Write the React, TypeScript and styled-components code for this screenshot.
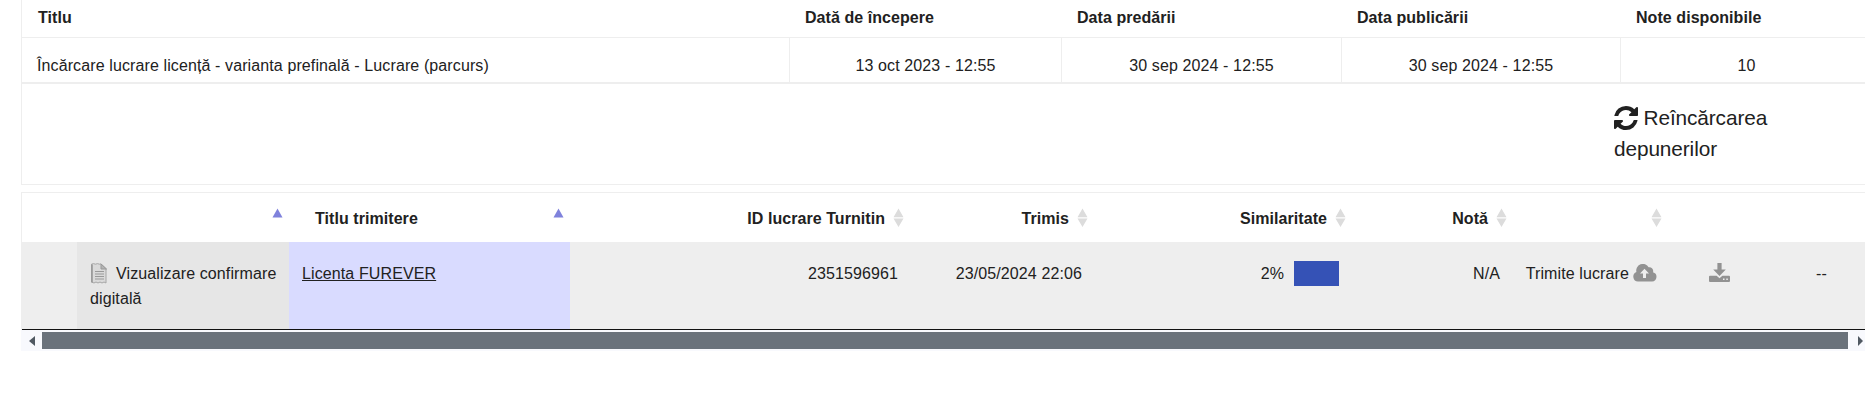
import React from "react";
import styled, { createGlobalStyle } from "styled-components";

const Global = createGlobalStyle`
  * { box-sizing: border-box; }
  html, body { margin: 0; background: #fff; overflow: hidden; }
  body {
    font-family: "Liberation Sans", Arial, sans-serif;
    font-size: 16px;
    line-height: 25px;
    letter-spacing: 0.11px;
    color: #212121;
  }
`;

const Page = styled.main`
  width: 1865px;
  height: 406px;
  padding-left: 21px;
  overflow: hidden;
`;

const InfoPanel = styled.section`
  width: 1852px;
  height: 185px;
  border: 1px solid #eee;
  border-top: 0;
`;

const InfoGrid = styled.div<{ $height: number; $line: number }>`
  display: grid;
  grid-template-columns: 767px 272px 280px 279px 252px;
  height: ${(p) => p.$height}px;
  border-bottom: ${(p) => p.$line}px solid #eee;
`;

const InfoHead = styled.div`
  padding: 5px 0 0 16px;
  font-weight: 700;
  letter-spacing: 0.06px;
  white-space: nowrap;
`;

const InfoCell = styled.div<{ $first?: boolean }>`
  padding: 15px 0 0 ${(p) => (p.$first ? "15px" : "0")};
  text-align: ${(p) => (p.$first ? "left" : "center")};
  border-left: ${(p) => (p.$first ? "0" : "1px solid #eee")};
  white-space: nowrap;
`;

const Reload = styled.div`
  width: 170px;
  margin: 18px 0 0 1592px;
  font-size: 20.8px;
  line-height: 31px;
  letter-spacing: -0.1px;

  svg { width: 28px; height: 28px; margin: 0 3.5px 0 -2px; vertical-align: -7px; }
`;

const Submissions = styled.section`
  width: 1852px;
  margin-top: 7px;
  border-left: 1px solid #eee;
  border-top: 1px solid #eee;
`;

const columns = "55px 212px 281px 344px 184px 258px 161px 155px 72px 130px";

const HeadRow = styled.div`
  display: grid;
  grid-template-columns: ${columns};
  height: 49px;
  font-weight: 700;
  letter-spacing: 0.06px;
`;

const HeadCell = styled.div<{ $lead?: boolean }>`
  display: flex;
  justify-content: ${(p) => (p.$lead ? "space-between" : "flex-end")};
  padding: 13px ${(p) => (p.$lead ? 6 : 10)}px 0 ${(p) => (p.$lead ? 26 : 0)}px;
  white-space: nowrap;

  svg { flex: none; margin: 2px 0 0 8px; }
`;

const DataRow = styled.div`
  display: grid;
  grid-template-columns: ${columns};
  height: 88px;
  background: #eee;
  border-bottom: 1px solid #111;
`;

const DataCell = styled.div<{ $tone?: string; $left?: boolean; $end?: number }>`
  padding: 19px ${(p) => p.$end ?? 13}px 0 ${(p) => (p.$left ? 13 : 0)}px;
  background: ${(p) => p.$tone ?? "transparent"};
  text-align: ${(p) => (p.$left ? "left" : "right")};
  white-space: ${(p) => (p.$left ? "normal" : "nowrap")};
`;

const DocIcon = styled.svg`
  width: 18px;
  height: 21px;
  margin-right: 8px;
  vertical-align: -5px;
`;

const PaperLink = styled.a`
  color: inherit;
  text-decoration: underline;
`;

const Score = styled.div`
  display: flex;
  justify-content: flex-end;
  gap: 10px;
`;

const ScoreBar = styled.span`
  width: 45px;
  height: 25px;
  background: #3552b6;
`;

const CloudIcon = styled.svg`
  width: 24px;
  height: 18px;
  margin-left: 4px;
  vertical-align: -3px;
`;

const DownloadIcon = styled.svg`
  width: 21px;
  height: 19px;
  vertical-align: -3px;
`;

const Scrollbar = styled.div`
  display: grid;
  grid-template-columns: 21px 1806px 17px;
  align-items: center;
  width: 1844px;
  height: 21px;
  background: #f8f9fd;
`;

const Thumb = styled.div`
  height: 17px;
  background: #6a727b;
`;

const Arrow = styled.svg<{ $offset: number }>`
  width: 6px;
  height: 10px;
  margin-left: ${(p) => p.$offset}px;
`;

const SortIcon = () => (
  <svg width="11" height="19" viewBox="0 0 11 19" fill="#dcdcdc">
    <path d="M5.5 .5 10.5 9.3H.5zM.5 10.4h10L5.5 19z" />
  </svg>
);

const SortUp = () => (
  <svg width="11" height="19" viewBox="0 0 11 19" fill="#7f82dc">
    <path d="M5.5 .5 10.5 9.6H.5z" />
  </svg>
);

const info = [
  ["Titlu", "Încărcare lucrare licență - varianta prefinală - Lucrare (parcurs)"],
  ["Dată de începere", "13 oct 2023 - 12:55"],
  ["Data predării", "30 sep 2024 - 12:55"],
  ["Data publicării", "30 sep 2024 - 12:55"],
  ["Note disponibile", "10"],
];

export default function App() {
  return (
    <Page>
      <Global />
      <InfoPanel>
        <InfoGrid $height={38} $line={1}>
          {info.map(([head]) => (
            <InfoHead key={head}>{head}</InfoHead>
          ))}
        </InfoGrid>
        <InfoGrid $height={46} $line={2}>
          {info.map(([head, value], i) => (
            <InfoCell key={head} $first={i === 0}>{value}</InfoCell>
          ))}
        </InfoGrid>
        <Reload>
          <svg viewBox="0 0 1792 1792" fill="currentColor">
            <path d="M1639 1056q0 5-1 7-64 268-268 434.5t-478 166.5q-146 0-282.5-55t-243.5-157l-129 129q-19 19-45 19t-45-19-19-45v-448q0-26 19-45t45-19h448q26 0 45 19t19 45-19 45l-137 137q71 66 161 102t187 36q134 0 250-65t186-179q11-17 53-117 8-23 30-23h192q13 0 22.5 9.5t9.5 22.5zm25-800v448q0 26-19 45t-45 19h-448q-26 0-45-19t-19-45 19-45l138-138q-148-137-349-137-134 0-250 65t-186 179q-11 17-53 117-8 23-30 23h-199q-13 0-22.5-9.5t-9.5-22.5v-7q65-268 270-434.5t480-166.5q146 0 284 55.5t245 156.5l130-129q19-19 45-19t45 19 19 45z" />
          </svg>
          Reîncărcarea depunerilor
        </Reload>
      </InfoPanel>

      <Submissions>
        <HeadRow>
          <HeadCell />
          <HeadCell $lead><span /><SortUp /></HeadCell>
          <HeadCell $lead>Titlu trimitere<SortUp /></HeadCell>
          <HeadCell>ID lucrare Turnitin<SortIcon /></HeadCell>
          <HeadCell>Trimis<SortIcon /></HeadCell>
          <HeadCell>Similaritate<SortIcon /></HeadCell>
          <HeadCell>Notă<SortIcon /></HeadCell>
          <HeadCell><SortIcon /></HeadCell>
          <HeadCell />
          <HeadCell />
        </HeadRow>
        <DataRow>
          <DataCell />
          <DataCell $tone="#e6e6e6" $left $end={6}>
            <DocIcon viewBox="0 0 18 21">
              <path d="M1.5 1.2l2-.6 2 .6 2-.6 2 .6 1.5-.4 5 5V20l-2-1-2 1-2-1-2 1-2-1-2 1-2.5-1z" fill="#dadada" stroke="#a6a6a6" />
              <path d="M2 1.5v18" stroke="#999" strokeWidth="1.6" />
              <path d="M11 1v5h5.5z" fill="#b4b4b4" stroke="#999" />
              <path d="M5 8.5h9M5 11h9M5 13.5h9M5 16h9" stroke="#999" strokeWidth="1.2" />
            </DocIcon>
            Vizualizare confirmare digitală
          </DataCell>
          <DataCell $tone="#d9dbff" $left><PaperLink>Licenta FUREVER</PaperLink></DataCell>
          <DataCell $end={16}>2351596961</DataCell>
          <DataCell $end={16}>23/05/2024 22:06</DataCell>
          <DataCell $end={17}><Score>2%<ScoreBar /></Score></DataCell>
          <DataCell $end={17}>N/A</DataCell>
          <DataCell $end={15}>
            Trimite lucrare
            <CloudIcon viewBox="0 0 24 18">
              <path d="M5 17.6A5 5 0 0 1 3.4 8 6.6 6.6 0 0 1 15.6 3.3 3.8 3.8 0 0 1 20 8.2a4.8 4.8 0 0 1-1 9.4z" fill="#929292" />
              <path d="M11.5 4.8 16 9.5h-3V14h-3V9.5H7z" fill="#eee" />
            </CloudIcon>
          </DataCell>
          <DataCell $end={14}>
            <DownloadIcon viewBox="0 0 21 19" fill="#929292">
              <path d="M8.4 0h4.2v6.6h4.2L10.5 13 4.2 6.6h4.2z" />
              <path d="M1 12.7h6.6l2.9 2.6 2.9-2.6H20q1 0 1 1V18q0 1-1 1H1q-1 0-1-1v-4.3q0-1 1-1zM14 15.5v1.5h1.5v-1.5zM17.3 15.5v1.5h1.5v-1.5z" fillRule="evenodd" />
            </DownloadIcon>
          </DataCell>
          <DataCell $end={47}>--</DataCell>
        </DataRow>
      </Submissions>
      <Scrollbar>
        <Arrow $offset={8} viewBox="0 0 6 10"><path d="M6 0v10L0 5z" fill="#505962" /></Arrow>
        <Thumb />
        <Arrow $offset={10} viewBox="0 0 6 10"><path d="M0 0v10l5-5z" fill="#505962" /></Arrow>
      </Scrollbar>
    </Page>
  );
}
